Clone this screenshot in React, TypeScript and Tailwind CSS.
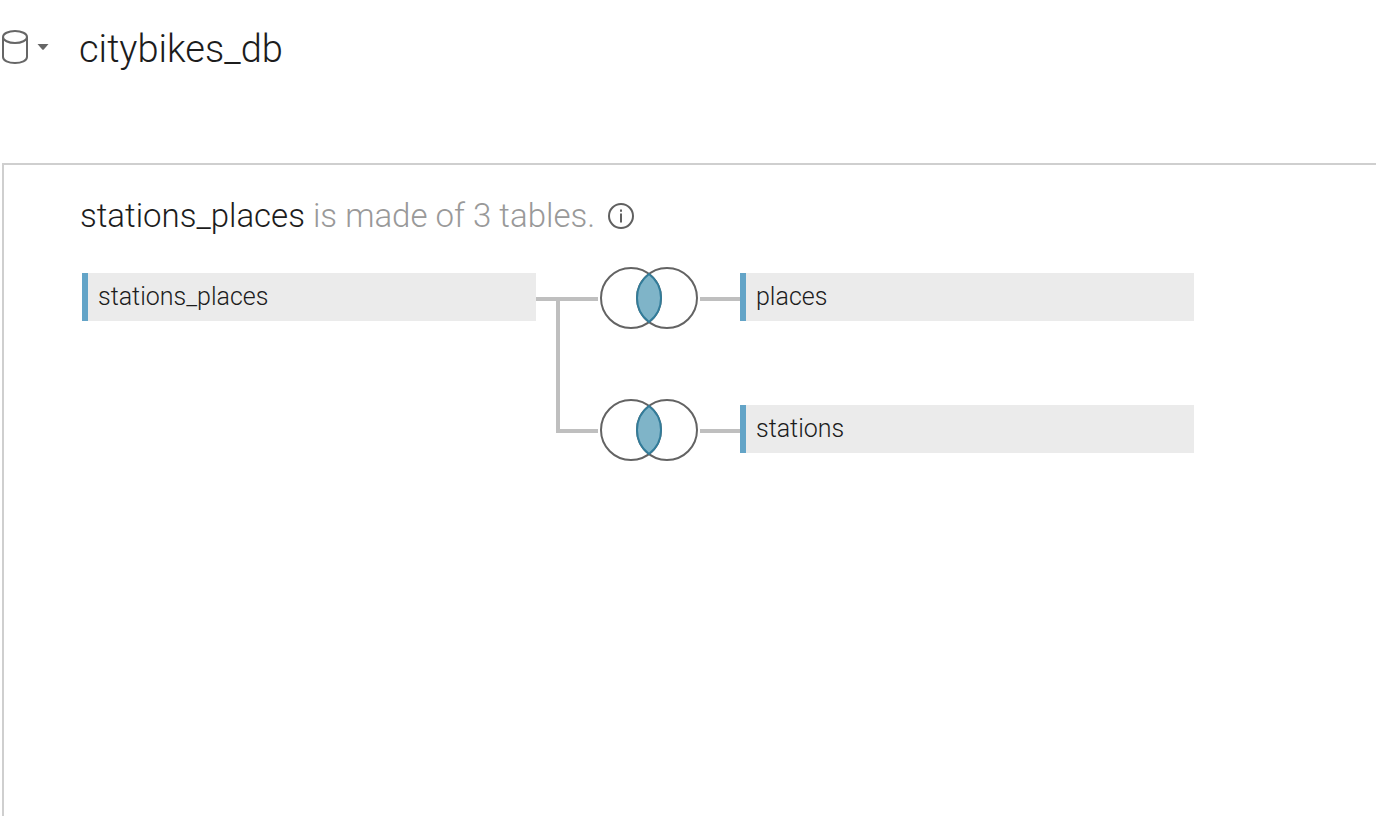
import React from "react";

function DatabaseIcon() {
  return (
    <svg width="28" height="36" viewBox="0 0 28 36" fill="none" stroke="#666" strokeWidth="2" aria-hidden="true">
      <ellipse cx="15" cy="8" rx="12" ry="6" />
      <path d="M3 8V28C3 31.5 8.4 34 15 34S27 31.5 27 28V8" />
    </svg>
  );
}

function CaretIcon() {
  return (
    <svg width="12" height="6" viewBox="0 0 12 6" fill="#666" aria-hidden="true">
      <path d="M0.5 0H11.5L7 5.2Q6 6.2 5 5.2Z" />
    </svg>
  );
}

function InfoIcon() {
  return (
    <svg width="26" height="26" viewBox="0 0 26 26" fill="none" stroke="#606060" strokeWidth="2" aria-hidden="true">
      <circle cx="13" cy="13" r="12" />
      <path d="M13 10.5V19.5M13 6.5V8.7" />
    </svg>
  );
}

function JoinButton({ table }: { table: string }) {
  return (
    <button type="button" aria-label={`Edit inner join with ${table}`} className="-my-2 block cursor-pointer">
      <svg width="102" height="64" viewBox="0 0 102 64" fill="none" strokeWidth="2" aria-hidden="true">
        <circle cx="33" cy="33" r="30" stroke="#636363" />
        <circle cx="69" cy="33" r="30" stroke="#636363" />
        <path d="M51 9A30 30 0 0 1 51 57A30 30 0 0 1 51 9Z" fill="#7fb4c8" stroke="#327c9a" />
      </svg>
    </button>
  );
}

function TableNode({ name }: { name: string }) {
  return (
    <button
      type="button"
      className="flex h-12 w-full cursor-pointer items-center border-l-6 border-[#63a4c7] bg-[#ebebeb] px-[10px] text-left text-[25px] leading-8 font-light text-[#1c1c1c]"
    >
      {name}
    </button>
  );
}

function Branch() {
  return (
    <svg className="row-span-2" width="62" height="180" viewBox="0 0 62 180" fill="none" stroke="#bfbfbf" strokeWidth="4" aria-hidden="true">
      <path d="M0 26H62M22 26V158H62" />
    </svg>
  );
}

function Link() {
  return (
    <svg width="40" height="48" viewBox="0 0 40 48" stroke="#bfbfbf" strokeWidth="4" aria-hidden="true">
      <path d="M0 26H40" />
    </svg>
  );
}

export default function App() {
  return (
    <div className="flex min-h-screen flex-col bg-white font-['Roboto',sans-serif] text-[#1c1c1c]">
      <header className="flex h-[163px] items-start pt-[23px]">
        <button type="button" aria-label="Data source options" aria-haspopup="menu" className="flex h-12 cursor-pointer items-center gap-[9px]">
          <DatabaseIcon />
          <CaretIcon />
        </button>
        <h1 className="pl-[30px] text-[38px] leading-[52px] font-light">citybikes_db</h1>
      </header>
      <main className="ml-[2px] flex-1 overflow-hidden border-t-2 border-l-2 border-[#cfcfcf] pt-[30px] pl-[76px]">
        <div className="flex items-center gap-[13px]">
          <h2 className="text-[33px] leading-[42px] font-light whitespace-nowrap">
            stations_places <span className="text-[#999]">is made of 3 tables.</span>
          </h2>
          <button type="button" aria-label="About this table" className="cursor-pointer">
            <InfoIcon />
          </button>
        </div>
        <div className="mt-9 ml-[2px] grid grid-cols-[454px_62px_102px_40px_454px] grid-rows-[48px_48px] gap-y-[84px]">
          <TableNode name="stations_places" />
          <Branch />
          <JoinButton table="places" />
          <Link />
          <TableNode name="places" />
          <div className="col-start-3">
            <JoinButton table="stations" />
          </div>
          <Link />
          <TableNode name="stations" />
        </div>
      </main>
    </div>
  );
}
